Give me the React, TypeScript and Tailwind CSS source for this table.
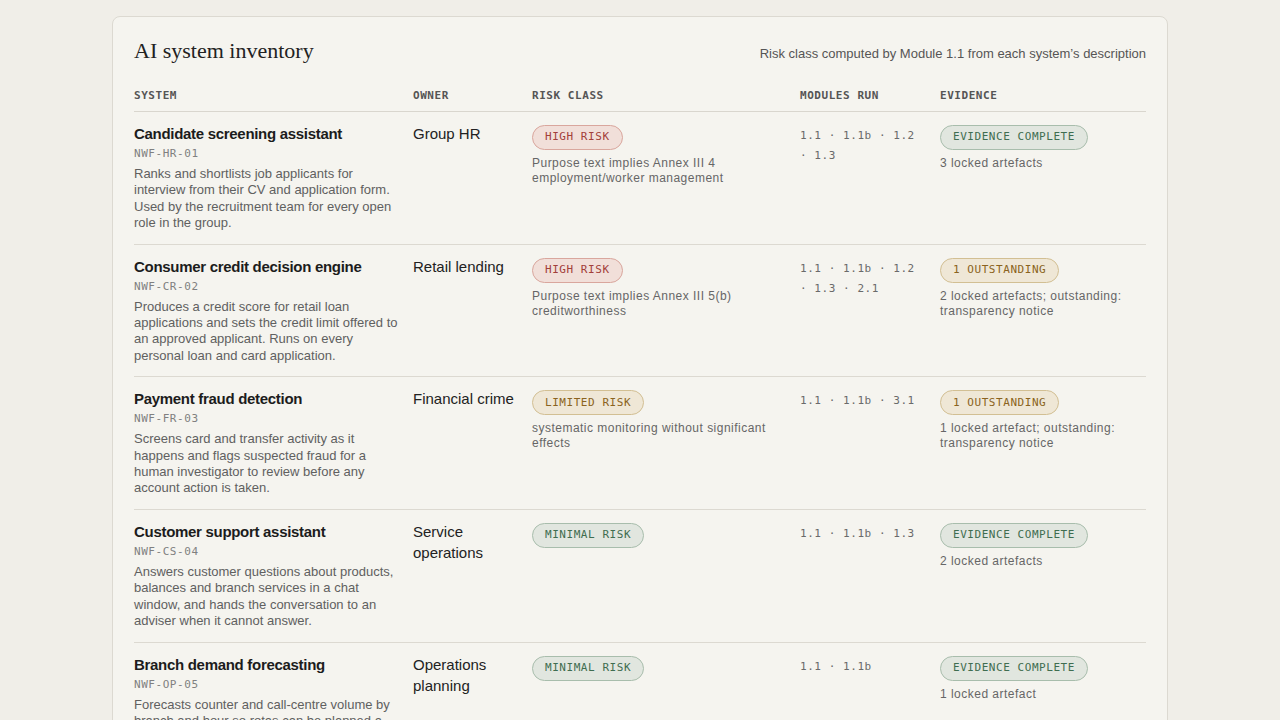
import { type FunctionComponent } from "react";

type Tone = "red" | "amber" | "green";

type System = {
  name: string;
  code: string;
  description: string;
  owner: string;
  risk: { label: string; tone: Tone; reason: string };
  modules: string;
  evidence: { label: string; tone: Tone; note: string };
};

const systems: System[] = [
  {
    name: "Candidate screening assistant",
    code: "NWF-HR-01",
    description:
      "Ranks and shortlists job applicants for interview from their CV and application form. Used by the recruitment team for every open role in the group.",
    owner: "Group HR",
    risk: {
      label: "HIGH RISK",
      tone: "red",
      reason: "Purpose text implies Annex III 4 employment/worker management",
    },
    modules: "1.1 · 1.1b · 1.2 · 1.3",
    evidence: { label: "EVIDENCE COMPLETE", tone: "green", note: "3 locked artefacts" },
  },
  {
    name: "Consumer credit decision engine",
    code: "NWF-CR-02",
    description:
      "Produces a credit score for retail loan applications and sets the credit limit offered to an approved applicant. Runs on every personal loan and card application.",
    owner: "Retail lending",
    risk: {
      label: "HIGH RISK",
      tone: "red",
      reason: "Purpose text implies Annex III 5(b) creditworthiness",
    },
    modules: "1.1 · 1.1b · 1.2 · 1.3 · 2.1",
    evidence: {
      label: "1 OUTSTANDING",
      tone: "amber",
      note: "2 locked artefacts; outstanding: transparency notice",
    },
  },
  {
    name: "Payment fraud detection",
    code: "NWF-FR-03",
    description:
      "Screens card and transfer activity as it happens and flags suspected fraud for a human investigator to review before any account action is taken.",
    owner: "Financial crime",
    risk: {
      label: "LIMITED RISK",
      tone: "amber",
      reason: "systematic monitoring without significant effects",
    },
    modules: "1.1 · 1.1b · 3.1",
    evidence: {
      label: "1 OUTSTANDING",
      tone: "amber",
      note: "1 locked artefact; outstanding: transparency notice",
    },
  },
  {
    name: "Customer support assistant",
    code: "NWF-CS-04",
    description:
      "Answers customer questions about products, balances and branch services in a chat window, and hands the conversation to an adviser when it cannot answer.",
    owner: "Service operations",
    risk: { label: "MINIMAL RISK", tone: "green", reason: "" },
    modules: "1.1 · 1.1b · 1.3",
    evidence: { label: "EVIDENCE COMPLETE", tone: "green", note: "2 locked artefacts" },
  },
  {
    name: "Branch demand forecasting",
    code: "NWF-OP-05",
    description:
      "Forecasts counter and call-centre volume by branch and hour so rotas can be planned a week ahead. Uses no personal data about customers or staff.",
    owner: "Operations planning",
    risk: { label: "MINIMAL RISK", tone: "green", reason: "" },
    modules: "1.1 · 1.1b",
    evidence: { label: "EVIDENCE COMPLETE", tone: "green", note: "1 locked artefact" },
  },
];

const toneClass: Record<Tone, string> = {
  red: "bg-[#f1dfd9] border-[#d9a69d] text-[#a2403a]",
  amber: "bg-[#efe7d6] border-[#d2bf93] text-[#8a6320]",
  green: "bg-[#e1e6df] border-[#a8bdac] text-[#3f6d50]",
};

const mono = "font-['DejaVu_Sans_Mono',monospace]";

const Pill: FunctionComponent<{ label: string; tone: Tone }> = ({ label, tone }) => (
  <span
    className={`flex h-[25px] items-center rounded-full border px-3 text-[11px] tracking-[0.05em] ${mono} ${toneClass[tone]}`}
  >
    {label}
  </span>
);

const headers = ["SYSTEM", "OWNER", "RISK CLASS", "MODULES RUN", "EVIDENCE"];
const cols = "grid grid-cols-[279px_119px_268px_140px_1fr]";

const App: FunctionComponent = () => {
  return (
    <div className="min-h-screen bg-[#f0eee8] pt-4 font-['Liberation_Sans',Arial,sans-serif] text-[#1f1f1f]">
      <div className="mx-auto w-[1056px] rounded-lg border border-[#dcd9d1] bg-[#f5f4ef] px-[21px] pt-5 pb-6">
        <div className="flex items-baseline justify-between">
          <h1 className="font-['Liberation_Serif',serif] text-[22px] leading-7 text-[#222]">
            AI system inventory
          </h1>
          <p className="text-[13px] text-[#555]">
            Risk class computed by Module 1.1 from each system’s description
          </p>
        </div>

        <div className={`${cols} mt-[23px] border-b border-[#d9d6ce] pb-[7px]`}>
          {headers.map((h) => (
            <div
              key={h}
              className={`text-[11px] font-bold leading-4 tracking-[0.05em] text-[#555] ${mono}`}
            >
              {h}
            </div>
          ))}
        </div>

        {systems.map((s) => (
          <div key={s.code} className={`${cols} border-b border-[#dcd9d1] pt-3 pb-3`}>
            <div className="pr-3">
              <div className="text-[15px] leading-5 font-bold tracking-[-0.02em] text-[#1c1c1c]">
                {s.name}
              </div>
              <div className={`mt-0.5 text-[11px] leading-4 tracking-[0.05em] text-[#808080] ${mono}`}>
                {s.code}
              </div>
              <p className="mt-1 text-[13px] leading-[16.4px] text-[#606060]">{s.description}</p>
            </div>

            <div className="-mt-px pr-3 text-[15px] leading-[21px] text-[#222]">{s.owner}</div>

            <div className="flex flex-col items-start pt-px pr-6">
              <Pill label={s.risk.label} tone={s.risk.tone} />
              {s.risk.reason && (
                <p className="mt-1.5 text-[12px] leading-[15px] tracking-[0.04em] text-[#666]">
                  {s.risk.reason}
                </p>
              )}
            </div>

            <div
              className={`pt-0.5 pr-4 text-[11px] leading-5 tracking-[0.05em] text-[#6a6a6a] ${mono}`}
            >
              {s.modules}
            </div>

            <div className="flex flex-col items-start pt-px pr-4">
              <Pill label={s.evidence.label} tone={s.evidence.tone} />
              <p className="mt-1.5 text-[12px] leading-[15px] tracking-[0.04em] text-[#666]">
                {s.evidence.note}
              </p>
            </div>
          </div>
        ))}
      </div>
    </div>
  );
};

export default App;
